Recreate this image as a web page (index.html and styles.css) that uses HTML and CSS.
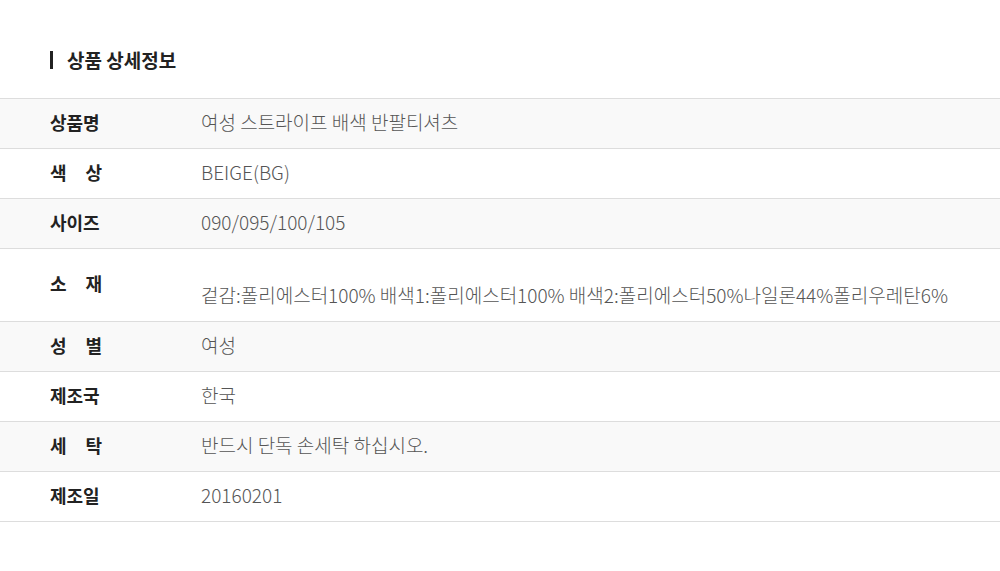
FILE: index.html
```
<!doctype html>
<html>
<head>
<meta charset="utf-8">
<title>상품 상세정보</title>
<link rel="stylesheet" href="styles.css">
</head>
<body>
	<h2 class="tit">상품 상세정보</h2>
	<table class="info">
		<tr class="odd"><th><span>상품명</span></th><td>여성 스트라이프 배색 반팔티셔츠</td></tr>
		<tr><th><span>색 상</span></th><td>BEIGE(BG)</td></tr>
		<tr class="odd"><th><span>사이즈</span></th><td>090/095/100/105</td></tr>
		<tr class="tall"><th><span>소 재</span></th><td>겉감:폴리에스터100% 배색1:폴리에스터100% 배색2:폴리에스터50%나일론44%폴리우레탄6%</td></tr>
		<tr class="odd"><th><span>성 별</span></th><td>여성</td></tr>
		<tr><th><span>제조국</span></th><td>한국</td></tr>
		<tr class="odd"><th><span>세 탁</span></th><td>반드시 단독 손세탁 하십시오.</td></tr>
		<tr><th><span>제조일</span></th><td>20160201</td></tr>
	</table>
</body>
</html>
```
FILE: styles.css
```
*{ margin:0; padding:0; }
body{ background:#fff; font-family:"Noto Sans CJK KR","Noto Sans",sans-serif; color:#222; }
.tit{ margin:51px 0 0 50px; height:18px; padding-left:14px; border-left:3px solid #222; font-size:19px; line-height:17px; font-weight:bold; color:#222; }
.info{ width:100%; margin-top:29px; border-collapse:collapse; border-top:1px solid #ddd; }
.info tr{ border-bottom:1px solid #ddd; }
.info tr.odd{ background:#f9f9f9; }
.info th{ width:201px; height:50px; padding:0 0 4px 50px; text-align:left; vertical-align:middle; box-sizing:border-box; }
.info th span{ display:block; width:52px; font-size:18px; font-weight:bold; color:#222; text-align:justify; text-align-last:justify; line-height:24px; }
.info td{ padding:0 0 4px; font-size:19px; font-weight:300; color:#555; line-height:24px; vertical-align:middle; }
.info tr.tall th{ height:73px; vertical-align:top; padding:22px 0 0 50px; }
.info tr.tall td{ vertical-align:top; padding:34px 0 0; }
```
